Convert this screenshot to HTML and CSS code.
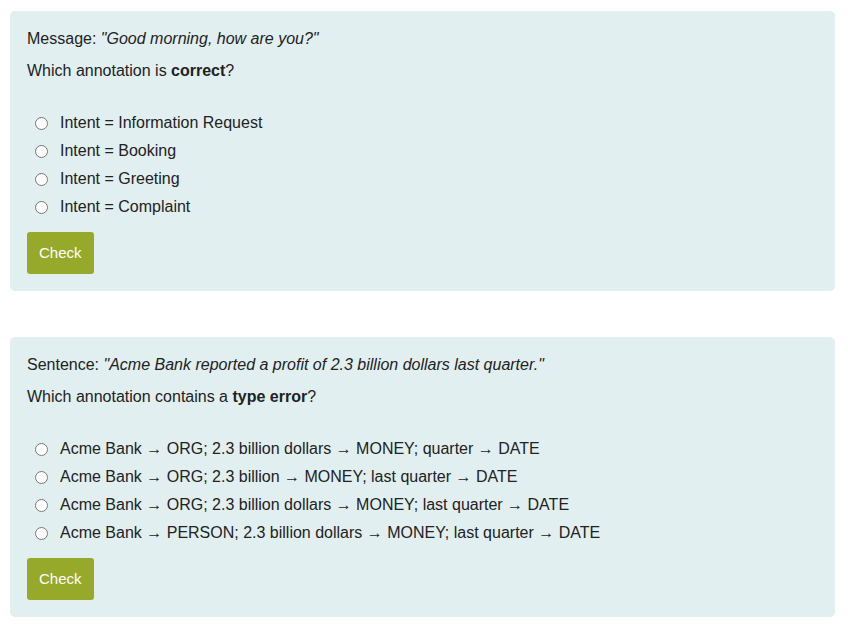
FILE: index.html
```html
<!doctype html>
<html>
  <head>
    <title>Annotation quiz</title>
    <meta name="viewport" content="width=device-width">
    <link rel="stylesheet" href="styles.css">
  </head>
  <body>
    <div class="quiz">
      <p>Message: <em>"Good morning, how are you?"</em></p>
      <p>Which annotation is <strong>correct</strong>?</p>
      <ul class="options">
        <li><label><input type="radio" name="q1"> Intent = Information Request</label></li>
        <li><label><input type="radio" name="q1"> Intent = Booking</label></li>
        <li><label><input type="radio" name="q1"> Intent = Greeting</label></li>
        <li><label><input type="radio" name="q1"> Intent = Complaint</label></li>
      </ul>
      <button type="button" class="check">Check</button>
    </div>
    <div class="quiz">
      <p>Sentence: <em>"Acme Bank reported a profit of 2.3 billion dollars last quarter."</em></p>
      <p>Which annotation contains a <strong>type error</strong>?</p>
      <ul class="options">
        <li><label><input type="radio" name="q2"> Acme Bank &rarr; ORG; 2.3 billion dollars &rarr; MONEY; quarter &rarr; DATE</label></li>
        <li><label><input type="radio" name="q2"> Acme Bank &rarr; ORG; 2.3 billion &rarr; MONEY; last quarter &rarr; DATE</label></li>
        <li><label><input type="radio" name="q2"> Acme Bank &rarr; ORG; 2.3 billion dollars &rarr; MONEY; last quarter &rarr; DATE</label></li>
        <li><label><input type="radio" name="q2"> Acme Bank &rarr; PERSON; 2.3 billion dollars &rarr; MONEY; last quarter &rarr; DATE</label></li>
      </ul>
      <button type="button" class="check">Check</button>
    </div>
  </body>
</html>
```

FILE: styles.css
```css
body {
  margin: 11px 13px 0 10px;
  font-family: "Liberation Sans", Arial, sans-serif;
  font-size: 16px;
  color: #222;
}
.quiz {
  background-color: #e1eff1;
  border-radius: 5px;
  padding: 16px 17px 17px;
  margin-bottom: 46px;
}
.quiz:last-child {
  margin-bottom: 0;
}
.quiz p {
  margin: 0 0 8px;
  line-height: 24px;
}
.options {
  list-style: none;
  margin: 26px 0 11px;
  padding: 0;
}
.options li {
  height: 28px;
  display: flex;
  align-items: center;
}
.options label {
  display: flex;
  align-items: center;
}
.options input {
  width: 13px;
  height: 13px;
  margin: 0 12px 0 8px;
}
.check {
  background-color: #97a92a;
  color: #fff;
  border: none;
  border-radius: 3px;
  font-family: inherit;
  font-size: 15px;
  line-height: 18px;
  padding: 12px;
  cursor: pointer;
}
```
